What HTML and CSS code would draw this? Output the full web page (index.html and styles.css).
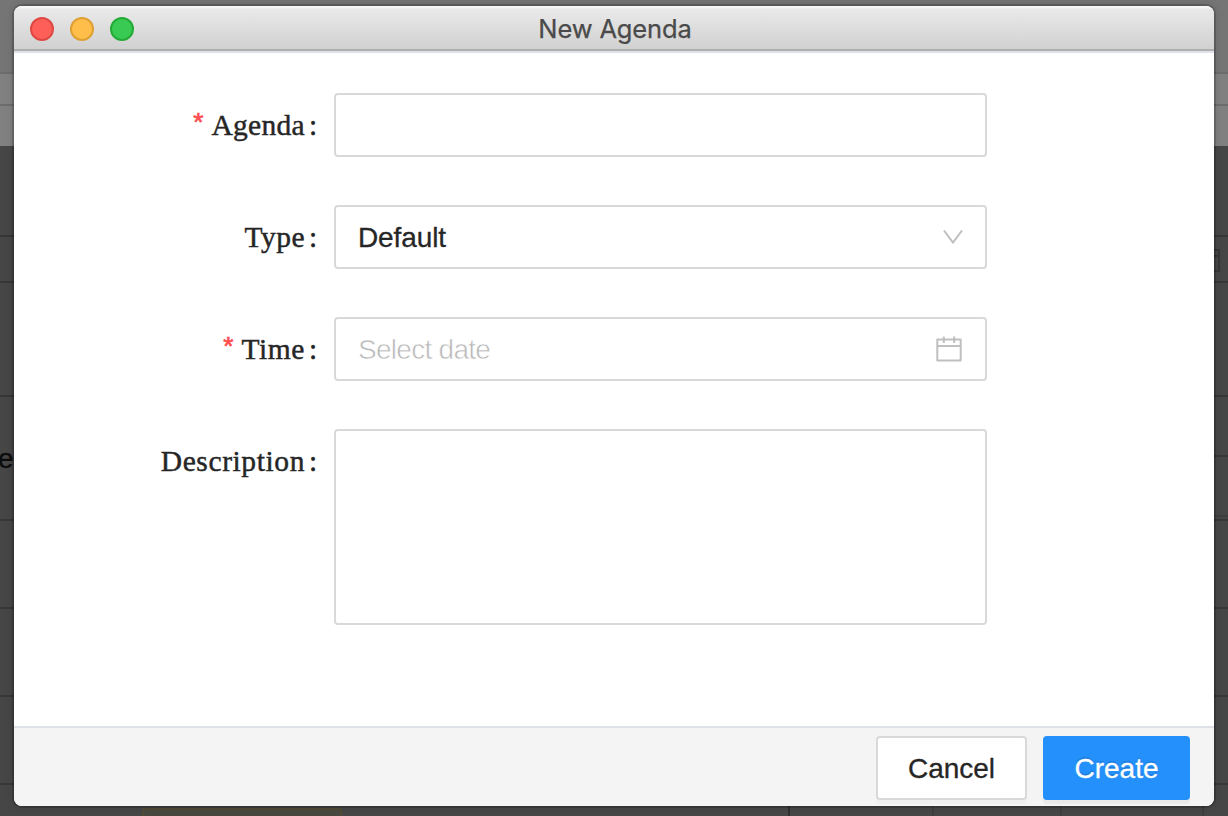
FILE: index.html
```html
<!DOCTYPE html>
<html lang="en">
<head>
<meta charset="utf-8">
<title>New Agenda</title>
<link rel="stylesheet" href="styles.css">
</head>
<body>
<svg class="backdrop" width="1228" height="816" viewBox="0 0 1228 816" aria-hidden="true">
  <rect width="1228" height="816" fill="#464646"/>
  <rect width="1228" height="146" fill="#808080"/>
  <rect width="1228" height="72" fill="#757575"/>
  <path d="M0 73H1228M0 105H1228" stroke="#6c6c6c" stroke-width="2"/>
  <path d="M0 236H1228M0 282H1228M0 396H1228M0 520H1228M0 608H1228M0 696H1228M0 784H1228M1200 456H1228" stroke="#363636" stroke-width="2"/>
  <path d="M1200 516H1228M933 800V816M1061 800V816M1203 800V816" stroke="#3e3e3e" stroke-width="2"/>
  <path d="M789 800V816" stroke="#303030" stroke-width="2"/>
  <path d="M1200 280V250H1219V271H1200M1200 256H1219" fill="none" stroke="#363636" stroke-width="2"/>
  <rect x="143" y="809" width="198" height="20" rx="3" fill="#494840" stroke="#514a35" stroke-width="2"/>
  <text class="backdrop-text" x="-2" y="468">e</text>
</svg>
<main class="window">
  <header class="titlebar">
    <div class="lights"><i class="light close"></i><i class="light minimize"></i><i class="light expand"></i></div>
    <h1 class="title">New Agenda</h1>
  </header>
  <form class="form">
    <div class="row">
      <label class="label agenda"><span class="required">*</span><span class="name">Agenda</span><span class="colon">:</span></label>
      <div class="field"></div>
    </div>
    <div class="row">
      <label class="label type"><span class="name">Type</span><span class="colon">:</span></label>
      <div class="field"><span class="value">Default</span>
        <svg class="chevron" width="22" height="16" viewBox="0 0 22 16"><path d="M2 1.5L11 13.5L20 1.5" fill="none" stroke="#bfbfbf" stroke-width="2"/></svg>
      </div>
    </div>
    <div class="row">
      <label class="label time"><span class="required">*</span><span class="name">Time</span><span class="colon">:</span></label>
      <div class="field"><span class="placeholder">Select date</span>
        <svg class="calendar" width="26" height="28" viewBox="0 0 26 28"><path d="M1.3 4.5H24.7V25.5H1.3ZM1.3 11H24.7M7.8 1.5V8M18.2 1.5V8" fill="none" stroke="#bfbfbf" stroke-width="2" stroke-linejoin="round"/></svg>
      </div>
    </div>
    <div class="row">
      <label class="label description"><span class="name">Description</span><span class="colon">:</span></label>
      <div class="field area"></div>
    </div>
  </form>
  <footer class="footer">
    <button class="button cancel">Cancel</button>
    <button class="button create">Create</button>
  </footer>
</main>
</body>
</html>
```
FILE: styles.css
```css
* { box-sizing: border-box; }
body {
  margin: 0;
  height: 816px;
  padding: 6px 14px 10px;
  overflow: hidden;
  background: #464646;
  font-family: "Liberation Sans", Arial, sans-serif;
}
.backdrop { position: absolute; left: 0; top: 0; z-index: -1; }
.backdrop-text { font-size: 28px; fill: #0c0c0c; stroke: #0c0c0c; stroke-width: .4px; }
.window {
  display: flex;
  flex-direction: column;
  width: 1200px;
  height: 800px;
  border-radius: 8px;
  overflow: hidden;
  background: #fff;
  box-shadow: 0 0 0 2px rgba(0, 0, 0, .16), 0 0 8px rgba(0, 0, 0, .18);
}
.titlebar {
  display: grid;
  grid-template-columns: 120px 1fr 120px;
  align-items: center;
  height: 47px;
  flex: none;
  padding: 0 0 2px 16px;
  background: linear-gradient(#f6f6f6 0 2px, #e9e9e9 3px, #d1d1d1 43px, #b0b0b0 43px 45px, #dee2e6 45px);
}
.lights { display: flex; gap: 16px; }
.light { width: 24px; height: 24px; border-radius: 50%; border: 2px solid; }
.close { background: #fe6059; border-color: #de4944; }
.minimize { background: #ffbe4a; border-color: #dfa033; }
.expand { background: #39ca54; border-color: #24ab37; }
.title {
  margin: 0;
  padding: 1px 14px 0 0;
  text-align: center;
  font: 400 25.5px/40px Inter, sans-serif;
  letter-spacing: -.15px;
  color: #4a4a4a;
  -webkit-text-stroke: .25px #4a4a4a;
}
.form { display: flex; flex-direction: column; gap: 48px; flex: 1; padding-top: 40px; }
.row { display: flex; }
.label {
  display: flex;
  justify-content: flex-end;
  width: 320px;
  height: 64px;
  padding-right: 17px;
  font: 29.5px/64px "Liberation Serif", Georgia, serif;
  color: #262626;
  -webkit-text-stroke: .45px #262626;
}
.agenda .name { letter-spacing: .3px; }
.type .name { letter-spacing: .5px; }
.time .name { letter-spacing: .6px; }
.description .name { letter-spacing: .6px; }
.colon { width: 8px; margin-left: 4px; text-align: center; }
.required {
  margin-right: 8px;
  font: 26px/58px "Liberation Sans", Arial, sans-serif;
  color: #ff4d4f;
  -webkit-text-stroke: .7px #ff4d4f;
}
.field {
  display: flex;
  align-items: center;
  justify-content: space-between;
  width: 653px;
  height: 64px;
  padding: 0 22px;
  border: 2px solid #d9d9d9;
  border-radius: 4px;
  font-size: 28px;
  background: #fff;
}
.area { height: 196px; }
.value { padding-top: 2px; color: #262626; letter-spacing: -.1px; -webkit-text-stroke: .3px #262626; }
.placeholder { padding-top: 2px; color: #b8b8b8; letter-spacing: -.72px; -webkit-text-stroke: .6px #fff; }
.chevron { margin-right: -1px; }
.calendar { margin-right: 1px; }
.footer {
  display: flex;
  justify-content: flex-end;
  gap: 16px;
  flex: none;
  height: 80px;
  padding: 8px 24px;
  border-top: 2px solid #dee2e6;
  background: #f4f4f4;
}
.button {
  height: 64px;
  padding: 2px 0 0;
  border: 2px solid #d9d9d9;
  border-radius: 4px;
  font: 28px "Liberation Sans", Arial, sans-serif;
  -webkit-text-stroke: .3px;
  box-shadow: 0 4px 0 rgba(0, 0, 0, .02);
}
.cancel { width: 151px; background: #fff; color: #262626; }
.create {
  width: 147px;
  border-color: #2490fb;
  background: #2490fb;
  color: #fff;
  text-shadow: 0 -2px 0 rgba(0, 0, 0, .12);
  box-shadow: 0 4px 0 rgba(0, 0, 0, .043);
}
```
